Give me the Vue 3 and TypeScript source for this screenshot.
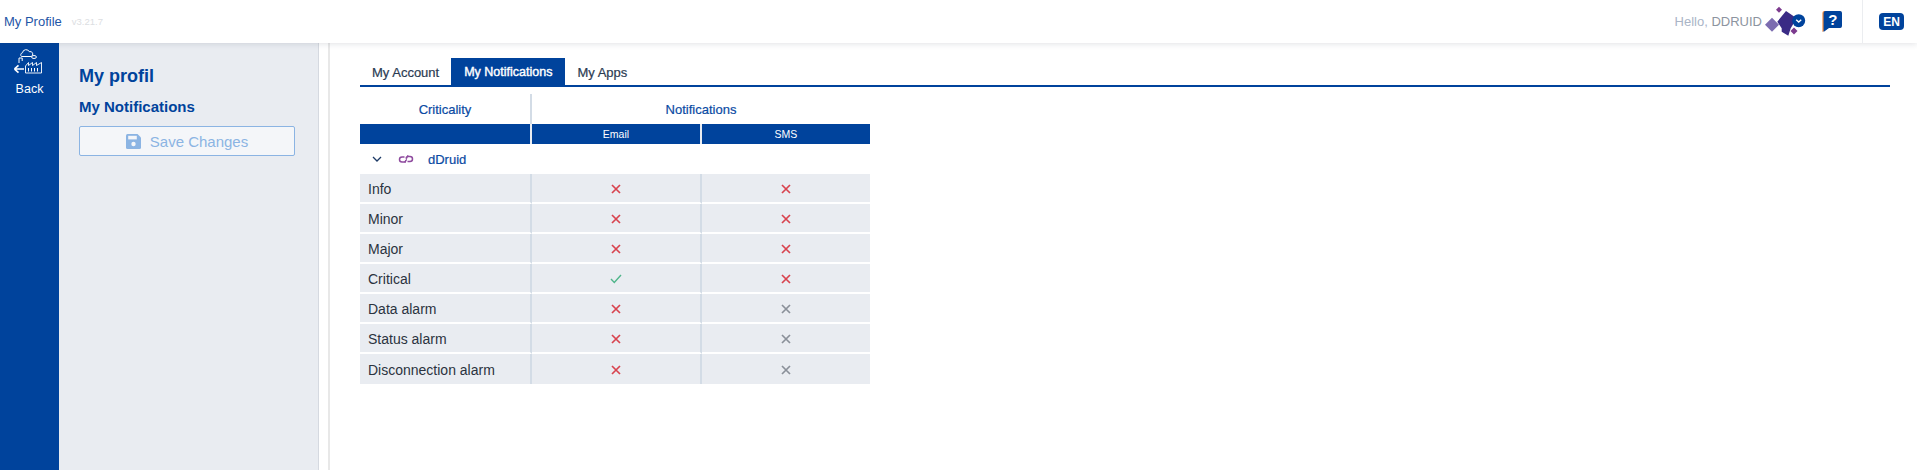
<script setup lang="ts">
type Mark = 'on' | 'off' | 'idle'
interface Row { label: string; email: Mark; sms: Mark }
const rows: Row[] = [
  { label: 'Info', email: 'off', sms: 'off' },
  { label: 'Minor', email: 'off', sms: 'off' },
  { label: 'Major', email: 'off', sms: 'off' },
  { label: 'Critical', email: 'on', sms: 'off' },
  { label: 'Data alarm', email: 'off', sms: 'idle' },
  { label: 'Status alarm', email: 'off', sms: 'idle' },
  { label: 'Disconnection alarm', email: 'off', sms: 'idle' },
]
const tabs = ['My Account', 'My Notifications', 'My Apps']
</script>

<template>
  <div class="page">
    <header class="topbar">
      <span class="app-name">My Profile</span>
      <span class="version">v3.21.7</span>
      <div class="top-right">
        <span class="hello">Hello, <span class="user">DDRUID</span></span>
        <svg class="avatar" width="42" height="36" viewBox="0 0 42 36">
          <polygon points="14,2.7 17,5.7 14,8.7 11,5.7" fill="#7c3a8e" />
          <polygon points="7,13.7 14,20.7 7,27.7 0,20.7" fill="#7c6cb0" />
          <polygon points="21,7 31.7,14.3 25.7,24.3 23.3,31.7 16.7,27.7 16.7,24.3 12.3,17.7" fill="#3a2b85" />
          <polygon points="29,23.5 32.5,27 29,30.5 25.5,27" fill="#7c3a8e" />
          <circle cx="33.7" cy="16.7" r="6.5" fill="#00439c" />
          <path d="M31.2 15.7 L33.7 18.1 L36.2 15.7" fill="none" stroke="#fff" stroke-width="1.4" />
        </svg>
        <svg class="help" width="21" height="23" viewBox="0 0 21 23">
          <path d="M3 1 H18 Q20 1 20 3 V16 Q20 18 18 18 H7 L1 22 V3 Q1 1 3 1 Z" fill="#f28a3c" transform="translate(-0.6 0)" />
          <path d="M3.6 1 H18 Q20 1 20 3 V16 Q20 18 18 18 H7 L1.6 22 V3 Q1.6 1 3.6 1 Z" fill="#00439c" />
          <text x="10.8" y="15" text-anchor="middle" class="help-q">?</text>
        </svg>
        <div class="lang-cell"><span class="lang">EN</span></div>
      </div>
    </header>

    <div class="body">
      <nav class="rail">
        <svg class="back-icon" width="32" height="32" viewBox="0 0 32 32" fill="none" stroke="#fff" stroke-width="1">
          <path d="M7.5 9.5 a2.2 2.2 0 0 1 1-3.8 a3.6 3.6 0 0 1 6.8-1 a2.4 2.4 0 0 1 1.8 4.8 z" />
          <ellipse cx="20" cy="10" rx="2.4" ry="1.5" />
          <path d="M5 16 V11 h3.2 V14" />
          <path d="M11.5 19 l3-3.5 v3 l4-3 v3 l4-3 v3 l5-3 V26 H11.5 Z" stroke-width="0.9" />
          <path d="M14.5 21 v3.5 M17.5 21 v3.5 M20.5 21 v3.5 M23.5 21 v3.5" />
          <path d="M0.5 22 H10 M0.5 22 l4-3.6 M0.5 22 l4 3.6" stroke-width="1.6" />
        </svg>
        <span class="back-label">Back</span>
      </nav>

      <aside class="panel">
        <h1 class="panel-title">My profil</h1>
        <h2 class="panel-sub">My Notifications</h2>
        <button class="save" type="button" disabled>
          <svg width="15" height="15" viewBox="0 0 15 15">
            <path d="M1.5 0 H11.5 L15 3.5 V13.5 Q15 15 13.5 15 H1.5 Q0 15 0 13.5 V1.5 Q0 0 1.5 0 Z" fill="#8bb4e3" />
            <rect x="2.2" y="1.8" width="8.6" height="3.6" fill="#f4f6f9" />
            <circle cx="7.5" cy="10" r="2.2" fill="#f4f6f9" />
          </svg>
          <span>Save Changes</span>
        </button>
      </aside>

      <main class="content">
        <div class="tabs">
          <span v-for="t in tabs" :key="t" class="tab" :class="{ active: t === 'My Notifications' }">{{ t }}</span>
        </div>

        <div class="grid">
          <div class="head c1">Criticality</div>
          <div class="head c23">Notifications</div>

          <div class="sub c1-sub"></div>
          <div class="sub c1-sub">Email</div>
          <div class="sub">SMS</div>

          <div class="group">
            <svg class="chev" width="10" height="7" viewBox="0 0 10 7" fill="none" stroke="#1d3a66" stroke-width="1.3">
              <path d="M1 1 L5 5 L9 1" />
            </svg>
            <svg class="link" width="16" height="10" viewBox="0 0 16 10" fill="none" stroke="#8e4a9e" stroke-width="1.5">
              <path d="M6.5 3 H4 a2.5 2.5 0 0 0 0 5 H6.5 a2.5 2.5 0 0 0 1.5-2" />
              <path d="M9.5 7.5 H12 a2.5 2.5 0 0 0 0-5 H9.5 a2.5 2.5 0 0 0 -1.5 2" />
              <path d="M10 1 L7 9" stroke-width="1" />
            </svg>
            <span class="group-name">dDruid</span>
          </div>

          <template v-for="r in rows" :key="r.label">
            <div class="cell label">{{ r.label }}</div>
            <div v-for="(m, i) in [r.email, r.sms]" :key="i" class="cell mark" :class="[m, { divided: i === 0 }]">
              <svg v-if="m === 'on'" width="12" height="10" viewBox="0 0 12 10" fill="none" stroke="#4fb58a" stroke-width="1.4">
                <path d="M1 5 L4.3 8.4 L11 1" />
              </svg>
              <svg v-else width="10" height="10" viewBox="0 0 10 10" fill="none" stroke="currentColor" stroke-width="1.7">
                <path d="M1 1 L9 9 M9 1 L1 9" />
              </svg>
            </div>
          </template>
        </div>
      </main>
    </div>
  </div>
</template>

<style>
html, body { margin: 0; background: #fff; }
</style>

<style scoped>
.page {
  width: 1917px;
  height: 470px;
  display: flex;
  flex-direction: column;
  font-family: "Liberation Sans", Arial, sans-serif;
  overflow: hidden;
  color: #2b3340;
}
.topbar {
  height: 43px;
  flex: none;
  display: flex;
  align-items: center;
  padding-left: 4px;
  box-shadow: 0 1px 6px rgba(40, 50, 70, 0.14);
  position: relative;
  z-index: 2;
  background: #fff;
}
.app-name { font-size: 13px; color: #1f56a6; }
.version { font-size: 9.5px; color: #dcdee2; margin-left: 10px; }
.top-right { margin-left: auto; display: flex; align-items: center; height: 100%; }
.hello { font-size: 13px; color: #aab5c7; }
.user { color: #8d94a0; }
.avatar { margin-left: 3px; }
.help { margin-left: 15px; margin-right: 19px; }
.help-q { font: 700 15px "Liberation Sans", Arial, sans-serif; fill: #fff; }
.lang-cell {
  width: 55px;
  height: 100%;
  border-left: 1px solid #ebedf0;
  display: flex;
  align-items: center;
  padding-left: 16px;
  box-sizing: border-box;
}
.lang {
  width: 25px;
  height: 17px;
  border-radius: 4px;
  background: #00439c;
  color: #fff;
  font-size: 12px;
  font-weight: 700;
  display: flex;
  align-items: center;
  justify-content: center;
}
.body { flex: 1; display: flex; min-height: 0; }
.rail {
  width: 59px;
  flex: none;
  background: #00439c;
  display: flex;
  flex-direction: column;
  align-items: center;
  color: #fff;
  padding-top: 4px;
  box-sizing: border-box;
}
.back-label { font-size: 12.5px; margin-top: 3px; }
.panel {
  width: 260px;
  flex: none;
  box-sizing: border-box;
  background: #e9ecf1;
  border-right: 1px solid #d5d9e0;
  padding: 22px 20px 0;
}
.panel-title { margin: 0; font-size: 18px; line-height: 22px; font-weight: 700; color: #00439c; }
.panel-sub { margin: 11px 0 0; font-size: 15px; line-height: 18px; font-weight: 700; color: #00439c; }
.save {
  margin-top: 10px;
  width: 216px;
  height: 30px;
  box-sizing: border-box;
  border: 1px solid #8bb4e3;
  border-radius: 2px;
  background: #f4f6f9;
  color: #8bb4e3;
  font: 400 15px "Liberation Sans", Arial, sans-serif;
  display: flex;
  align-items: center;
  justify-content: center;
  gap: 9px;
  padding: 0;
}
.content {
  flex: 1;
  margin-left: 9px;
  border-left: 2px solid #e8e8e8;
  padding: 15px 27px 0 30px;
  min-width: 0;
}
.tabs {
  display: flex;
  border-bottom: 2px solid #00439c;
  height: 27px;
}
.tab {
  font-size: 13px;
  line-height: 29px;
  padding: 0 12px;
  color: #2b3b52;
  -webkit-text-stroke: 0.2px currentColor;
}
.tab.active {
  background: #00439c;
  color: #fff;
  font-size: 12.5px;
  padding: 0 13px;
  -webkit-text-stroke: 0.4px #fff;
}
.grid {
  margin-top: 7px;
  width: 510px;
  display: grid;
  grid-template-columns: 172px 170px 168px;
}
.head {
  height: 30px;
  display: flex;
  align-items: center;
  justify-content: center;
  font-size: 13px;
  color: #0a4aa3;
  -webkit-text-stroke: 0.2px #0a4aa3;
}
.c1 { border-right: 2px solid #d3dce6; }
.c23 { grid-column: span 2; }
.sub {
  height: 20px;
  background: #00439c;
  color: #fff;
  font-size: 10.5px;
  display: flex;
  align-items: center;
  justify-content: center;
}
.c1-sub { border-right: 2px solid #e9ecf1; }
.group {
  grid-column: span 3;
  height: 30px;
  display: flex;
  align-items: center;
  padding-left: 12px;
}
.link { margin-left: 16px; }
.group-name { margin-left: 14px; font-size: 13px; color: #0a4aa3; -webkit-text-stroke: 0.2px #0a4aa3; }
.cell {
  height: 30px;
  background: #e9ecf1;
  box-sizing: border-box;
  border-bottom: 2px solid #fff;
  display: flex;
  align-items: center;
}
.cell:nth-last-child(-n + 3) { border-bottom: 0; }
.label {
  padding: 2px 0 0 8px;
  font-size: 14px;
  color: #2b3340;
  border-right: 2px solid #d3dce6;
}
.mark { justify-content: center; padding-top: 1px; }
.divided { border-right: 2px solid #d3dce6; }
.off { color: #d8434f; }
.idle { color: #8a9099; }
</style>
